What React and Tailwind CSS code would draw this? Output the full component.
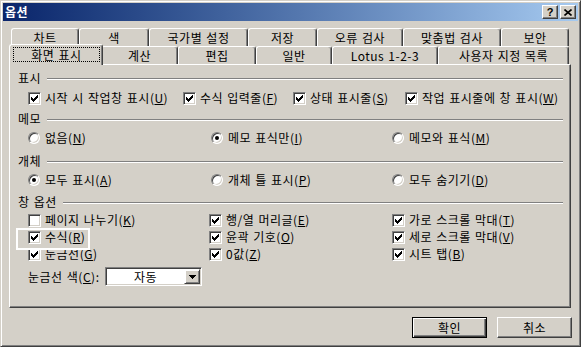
import React from "react";

const raised =
  "bg-[#d4d0c8] border border-t-[#ffffff] border-l-[#ffffff] border-r-[#404040] border-b-[#404040] shadow-[inset_-1px_-1px_0_#808080]";
const sunkenBox =
  "border border-t-[#808080] border-l-[#808080] border-r-[#ffffff] border-b-[#ffffff] shadow-[inset_1px_1px_0_#404040,inset_-1px_-1px_0_#d4d0c8]";

function Check({ checked }) {
  return (
    <span className={`w-[13px] h-[13px] shrink-0 bg-white flex items-center justify-center ${sunkenBox}`}>
      {checked && (
        <svg width="7" height="7" viewBox="0 0 7 7" shapeRendering="crispEdges">
          <path d="M0 2h1v1h1v1h1v-1h1v-1h1v-1h1v-1h1v3h-1v1h-1v1h-1v1h-1v1h-1v-1h-1v-1h-1z" fill="#000" />
        </svg>
      )}
    </span>
  );
}

function Radio({ checked }) {
  return (
    <span
      className={`w-[12px] h-[12px] shrink-0 rounded-full bg-white flex items-center justify-center border border-t-[#808080] border-l-[#808080] border-r-[#ffffff] border-b-[#ffffff] shadow-[inset_1px_1px_0_#404040,inset_-1px_-1px_0_#d4d0c8]`}
    >
      {checked && <span className="w-[4px] h-[4px] rounded-full bg-black" />}
    </span>
  );
}

function Lbl({ t, k, suffix }) {
  return (
    <span className="whitespace-nowrap">
      {t}(<u>{k}</u>){suffix}
    </span>
  );
}

function CheckItem({ checked, t, k, w }) {
  return (
    <div className={`flex items-center gap-[4px] shrink-0 ${w || ""}`}>
      <Check checked={checked} />
      <Lbl t={t} k={k} />
    </div>
  );
}

function RadioItem({ checked, t, k, w }) {
  return (
    <div className={`flex items-center gap-[5px] shrink-0 ${w || ""}`}>
      <Radio checked={checked} />
      <Lbl t={t} k={k} />
    </div>
  );
}

function Header({ title, mt }) {
  return (
    <div className={`flex items-center ml-[8px] w-[545px] h-[16px] ${mt}`}>
      <span className="whitespace-nowrap">{title}</span>
      <div className="flex-1 ml-[6px] border-t border-[#808080] shadow-[0_1px_0_#ffffff]" />
    </div>
  );
}

function Tab({ label, w }) {
  return (
    <div
      className={`${w} h-[18px] shrink-0 flex items-center justify-center rounded-t-[3px] bg-[#d4d0c8] border-t border-l border-r border-t-[#ffffff] border-l-[#ffffff] border-r-[#404040] shadow-[inset_-1px_0_0_#808080]`}
    >
      <span className="whitespace-nowrap">{label}</span>
    </div>
  );
}

export default function App() {
  return (
    <div className="w-[581px] h-[347px] bg-[#d4d0c8] border border-t-[#d4d0c8] border-l-[#d4d0c8] border-r-[#404040] border-b-[#404040] shadow-[inset_1px_1px_0_#ffffff,inset_-1px_-1px_0_#808080] p-[2px] flex flex-col font-['Noto_Sans_CJK_KR',sans-serif] text-[12px] leading-[16px] tracking-[0.5px] [word-spacing:1px] text-black select-none">
      {/* Title bar */}
      <div className="h-[18px] shrink-0 flex items-center bg-linear-to-r from-[#0a246a] to-[#a6caf0] pl-[2px] pr-[2px]">
        <span className="text-white font-bold text-[12px] leading-[16px]">옵션</span>
        <div className="flex-1" />
        <div className={`w-[16px] h-[14px] flex items-center justify-center ${raised}`}>
          <span className="font-['Liberation_Sans',sans-serif] font-bold text-[11px] leading-[11px] tracking-normal">?</span>
        </div>
        <div className={`ml-[2px] w-[16px] h-[14px] flex items-center justify-center ${raised}`}>
          <svg width="8" height="7" viewBox="0 0 8 7">
            <path d="M0.5 0.5L7.5 6.5M7.5 0.5L0.5 6.5" stroke="#000" strokeWidth="1.6" />
          </svg>
        </div>
      </div>

      {/* Body */}
      <div className="pl-[6px] pt-[7px] flex flex-col">
        {/* Tab row 1 */}
        <div className="flex ml-[2px] h-[18px]">
          <Tab label="차트" w="w-[68px]" />
          <Tab label="색" w="w-[70px]" />
          <Tab label="국가별 설정" w="w-[99px]" />
          <Tab label="저장" w="w-[69px]" />
          <Tab label="오류 검사" w="w-[86px]" />
          <Tab label="맞춤법 검사" w="w-[98px]" />
          <Tab label="보안" w="w-[68px]" />
        </div>
        {/* Tab row 2 */}
        <div className="flex ml-[2px] h-[18px] items-start">
          <div className="relative z-10 -ml-[2px] -mr-[2px] -mt-[2px] w-[94px] h-[21px] shrink-0 flex rounded-t-[3px] bg-[#d4d0c8] border-t border-l border-r border-t-[#ffffff] border-l-[#ffffff] border-r-[#404040] shadow-[inset_-1px_0_0_#808080] pl-[3px] pr-[2px] pt-[2px] pb-[3px]">
            <div className="flex-1 border border-dotted border-black flex items-center justify-center">
              <span className="whitespace-nowrap">화면 표시</span>
            </div>
          </div>
          <Tab label="계산" w="w-[77px]" />
          <Tab label="편집" w="w-[78px]" />
          <Tab label="일반" w="w-[76px]" />
          <Tab label="Lotus 1-2-3" w="w-[106px]" />
          <Tab label="사용자 지정 목록" w="w-[131px]" />
        </div>

        {/* Panel */}
        <div className="relative w-[562px] h-[244px] border border-t-[#ffffff] border-l-[#ffffff] border-r-[#404040] border-b-[#404040] shadow-[inset_-1px_-1px_0_#808080] flex flex-col">
          <Header title="표시" mt="mt-[5px]" />
          <div className="flex items-center h-[16px] mt-[4px] pl-[18px]">
            <CheckItem checked t="시작 시 작업창 표시" k="U" w="w-[155px]" />
            <CheckItem checked t="수식 입력줄" k="F" w="w-[110px]" />
            <CheckItem checked t="상태 표시줄" k="S" w="w-[112px]" />
            <CheckItem checked t="작업 표시줄에 창 표시" k="W" />
          </div>

          <Header title="메모" mt="mt-[5px]" />
          <div className="flex items-center h-[16px] mt-[3px] pl-[18px]">
            <RadioItem t="없음" k="N" w="w-[183px]" />
            <RadioItem checked t="메모 표식만" k="I" w="w-[181px]" />
            <RadioItem t="메모와 표식" k="M" />
          </div>

          <Header title="개체" mt="mt-[7px]" />
          <div className="flex items-center h-[16px] mt-[3px] pl-[18px]">
            <RadioItem checked t="모두 표시" k="A" w="w-[183px]" />
            <RadioItem t="개체 틀 표시" k="P" w="w-[181px]" />
            <RadioItem t="모두 숨기기" k="D" />
          </div>

          <Header title="창 옵션" mt="mt-[6px]" />
          <div className="flex items-center h-[16px] mt-[2px] pl-[18px]">
            <CheckItem t="페이지 나누기" k="K" w="w-[181px]" />
            <CheckItem checked t="행/열 머리글" k="E" w="w-[183px]" />
            <CheckItem checked t="가로 스크롤 막대" k="T" />
          </div>
          <div className="flex items-center h-[16px] mt-[1px] pl-[18px]">
            <CheckItem checked t="수식" k="R" w="w-[181px]" />
            <CheckItem checked t="윤곽 기호" k="O" w="w-[183px]" />
            <CheckItem checked t="세로 스크롤 막대" k="V" />
          </div>
          <div className="flex items-center h-[16px] mt-[1px] pl-[18px]">
            <CheckItem checked t="눈금선" k="G" w="w-[181px]" />
            <CheckItem checked t="0값" k="Z" w="w-[183px]" />
            <CheckItem checked t="시트 탭" k="B" />
          </div>

          <div className="flex items-center h-[19px] mt-[5px] pl-[18px]">
            <span className="w-[77px] shrink-0">
              <Lbl t="눈금선 색" k="C" suffix=":" />
            </span>
            <div className={`w-[97px] h-[19px] bg-white flex p-[1px] ${sunkenBox}`}>
              <div className="flex-1 flex items-center justify-center">
                <span>자동</span>
              </div>
              <div className={`w-[16px] h-full flex items-center justify-center ${raised} border-t-[#d4d0c8] border-l-[#d4d0c8] shadow-[inset_1px_1px_0_#ffffff,inset_-1px_-1px_0_#808080]`}>
                <svg width="7" height="4" viewBox="0 0 7 4" shapeRendering="crispEdges">
                  <path d="M0 0h7v1h-1v1h-1v1h-1v1h-1v-1h-1v-1h-1v-1h-1z" fill="#000" />
                </svg>
              </div>
            </div>
          </div>

          {/* highlight rectangle around 수식(R) */}
          <div className="absolute left-[6px] top-[163px] w-[74px] h-[22px] border-2 border-white pointer-events-none" />
        </div>

        {/* Buttons */}
        <div className="flex justify-end gap-[10px] w-[563px] mt-[9px]">
          <div className="w-[75px] h-[21px] border border-black bg-[#d4d0c8] shadow-[inset_1px_1px_0_#ffffff,inset_-1px_-1px_0_#404040,inset_-2px_-2px_0_#808080] flex items-center justify-center">
            <span>확인</span>
          </div>
          <div className={`w-[75px] h-[21px] flex items-center justify-center ${raised}`}>
            <span>취소</span>
          </div>
        </div>
      </div>
    </div>
  );
}
